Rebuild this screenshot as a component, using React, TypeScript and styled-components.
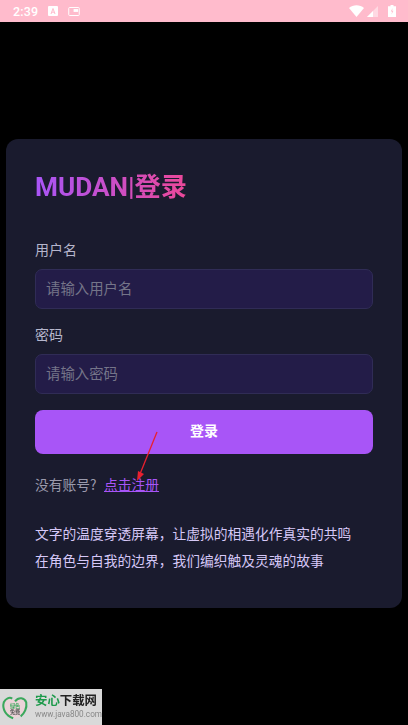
import React from "react";
import styled, { createGlobalStyle } from "styled-components";

const Global = createGlobalStyle`
  html, body { margin: 0; padding: 0; background: #000; }
  * { box-sizing: border-box; }
  body { font-family: Roboto, "Noto Sans CJK SC", sans-serif; }
`;
const Page = styled.div`
  position: relative; width: 408px; height: 725px; background: #000; overflow: hidden;
  display: flex; flex-direction: column;
`;
const StatusBar = styled.div`
  height: 22px; background: #ffbbcc; display: flex; align-items: center; padding: 0 12px 0 13px; color: #fff;
`;
const Time = styled.span`font: 500 12.5px Roboto, sans-serif; letter-spacing: .2px; margin-right: 13px;`;
const StatusLeft = styled.div`display: flex; align-items: center; gap: 10px;`;
const StatusRight = styled.div`margin-left: auto; display: flex; align-items: center; gap: 5px;`;
const Main = styled.main`flex: 1; padding: 117px 6px 0;`;
const Card = styled.section`
  height: 469px; background: #1a1b2e; border-radius: 12px; padding: 29px 29px 0;
`;
const Title = styled.h1`
  margin: 0 0 33px; width: 152px; font: 700 26.2px/38px Roboto, "Noto Sans CJK SC", sans-serif;
  background: linear-gradient(90deg, #a855f7, #ec4899); -webkit-background-clip: text; background-clip: text; color: transparent;
  white-space: nowrap;
`;
const Label = styled.label`display: block; font: 400 14px/20px "Noto Sans CJK SC", sans-serif; color: #b6b6cc; margin-bottom: 10px;`;
const Field = styled.input`
  display: block; width: 100%; height: 40px; padding: 0 10px 3px 10px; margin-bottom: 15px; border-radius: 7px;
  border: 1px solid #302c56; background: #231c48; color: #fff; outline: none;
  font: 400 14.4px "Noto Sans CJK SC", sans-serif;
  &::placeholder { color: #757589; opacity: 1; }
`;
const Submit = styled.button`
  display: block; width: 100%; height: 44px; border: none; border-radius: 8px; background: #a855f7; color: #fff;
  padding: 0 0 4px; margin-top: 16px; font: 700 14px "Noto Sans CJK SC", sans-serif;
`;
const RegisterRow = styled.p`margin: 13px 0 0; font: 400 13.75px/34px "Noto Sans CJK SC", sans-serif; color: #9a9aac;`;
const RegisterLink = styled.a`color: #a855f7; text-decoration: underline; margin-left: 7.5px;`;
const Slogan = styled.p`margin: 19px 0 0; font: 400 13.75px/27px "Noto Sans CJK SC", sans-serif; color: #d6c8f7; white-space: nowrap;`;
const Arrow = styled.svg`position: absolute; left: 130px; top: 428px;`;
const Watermark = styled.div`
  position: absolute; left: 0; bottom: 0; width: 102px; height: 36px; background: #d9d9d9;
  display: flex; align-items: center; padding-left: 1px; gap: 6px; filter: blur(.5px);
`;
const WmText = styled.div`display: flex; flex-direction: column; gap: 2px; align-self: flex-start; padding-top: 4px;`;
const WmName = styled.span`font: 700 12.4px/14px "Noto Sans CJK SC", sans-serif; color: #222;`;
const WmGreen = styled.span`color: #1d9a4b;`;
const WmUrl = styled.span`font: 400 8.2px/10px Roboto, sans-serif; color: #888;`;

export default function App() {
  return (
    <Page>
      <Global />
      <StatusBar>
        <StatusLeft>
          <Time>2:39</Time>
          <svg width="10" height="10" viewBox="0 0 10 10" style={{ marginLeft: -13 }}>
            <rect width="10" height="10" rx="1" fill="#fff" />
            <path d="M3 8 5 2.5 7 8M3.8 6.2h2.4" stroke="#ffbbcc" strokeWidth="1" fill="none" />
          </svg>
          <svg width="12" height="9" viewBox="0 0 14 11">
            <rect x=".6" y=".6" width="12.8" height="9.8" rx="1" fill="none" stroke="#fff" strokeWidth="1.2" />
            <rect x="6.5" y="2.5" width="5.5" height="3.5" fill="#fff" />
          </svg>
        </StatusLeft>
        <StatusRight>
          <svg width="15" height="12" viewBox="0 0 15 12"><path d="M0 3C4-.6 11-.6 15 3L7.5 12Z" fill="#fff" /></svg>
          <svg width="11" height="11" viewBox="0 0 11 11" style={{ marginLeft: -2 }}>
            <path d="M11 0V11H0Z" fill="#fff" fillOpacity=".45" /><path d="M6 5V11H0Z" fill="#fff" />
          </svg>
          <svg width="8" height="12" viewBox="0 0 8 12" style={{ marginLeft: 5 }}>
            <path d="M2.5 0h3v1.2H8V12H0V1.2h2.5Z" fill="#fff" />
            <path d="M4.6 3 2.8 6.6h1.3L3.5 9.5l1.9-3.7H4.1Z" fill="#ffbbcc" />
          </svg>
        </StatusRight>
      </StatusBar>
      <Main>
        <Card>
          <Title>MUDAN|登录</Title>
          <Label>用户名</Label>
          <Field placeholder="请输入用户名" readOnly />
          <Label>密码</Label>
          <Field placeholder="请输入密码" readOnly />
          <Submit>登录</Submit>
          <RegisterRow>没有账号?<RegisterLink href="#">点击注册</RegisterLink></RegisterRow>
          <Slogan>文字的温度穿透屏幕，让虚拟的相遇化作真实的共鸣<br />在角色与自我的边界，我们编织触及灵魂的故事</Slogan>
        </Card>
      </Main>
      <Arrow width="32" height="56" viewBox="0 0 32 56">
        <path d="M27 4 10 46" stroke="#e8202f" strokeWidth="1.3" fill="none" />
        <path d="M7 53 8 43 14 46Z" fill="#e8202f" />
      </Arrow>
      <Watermark>
        <svg width="30" height="28" viewBox="0 0 30 28">
          <path d="M15 26C6 24 1 17 3 9 5 5 10 3 15 8 20 3 25 5 27 9 29 17 24 24 15 26Z" fill="#ebd3d8" />
          <path d="M13 26C5 23 1 16 3 9 5 5 9 3 12 5M15 8C19 3 25 4 27 9 28 15 25 21 21 24" stroke="#3aa85c" strokeWidth="2.2" fill="none" />
          <text x="15" y="15" fontSize="5.5" fontWeight="700" textAnchor="middle" fill="#3aa85c" fontFamily="Noto Sans CJK SC">绿色</text>
          <text x="15" y="22" fontSize="5.5" fontWeight="700" textAnchor="middle" fill="#555" fontFamily="Noto Sans CJK SC">免费</text>
        </svg>
        <WmText>
          <WmName><WmGreen>安心</WmGreen>下载网</WmName>
          <WmUrl>www.java800.com</WmUrl>
        </WmText>
      </Watermark>
    </Page>
  );
}
